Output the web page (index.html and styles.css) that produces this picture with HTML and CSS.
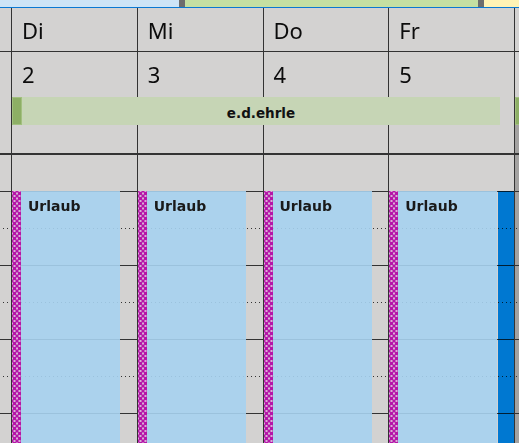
FILE: index.html
```html
<!DOCTYPE html>
<html lang="de">
<head>
<meta charset="utf-8">
<title>Kalender</title>
<link rel="stylesheet" href="styles.css">
</head>
<body>
<div class="top">
  <span class="seg blue"></span><span class="seg sep"></span><span class="seg green"></span><span class="seg sep"></span><span class="seg yellow"></span>
</div>
<div class="cal">
  <div class="col gutter">
    <div class="name"></div>
    <div class="num"></div>
    <div class="blank"></div>
    <div class="hour"></div><div class="hour"></div><div class="hour"></div><div class="hour"></div>
  </div>
  <div class="col day">
    <div class="name">Di</div>
    <div class="num">2</div>
    <div class="blank"></div>
    <div class="hour"></div><div class="hour"></div><div class="hour"></div><div class="hour"></div>
    <div class="event"><span class="hatch"></span><span class="title">Urlaub</span></div>
  </div>
  <div class="col day">
    <div class="name">Mi</div>
    <div class="num">3</div>
    <div class="blank"></div>
    <div class="hour"></div><div class="hour"></div><div class="hour"></div><div class="hour"></div>
    <div class="event"><span class="hatch"></span><span class="title">Urlaub</span></div>
  </div>
  <div class="col day">
    <div class="name">Do</div>
    <div class="num">4</div>
    <div class="blank"></div>
    <div class="hour"></div><div class="hour"></div><div class="hour"></div><div class="hour"></div>
    <div class="event"><span class="hatch"></span><span class="title">Urlaub</span></div>
  </div>
  <div class="col day">
    <div class="name">Fr</div>
    <div class="num">5</div>
    <div class="blank"></div>
    <div class="hour"></div><div class="hour"></div><div class="hour"></div><div class="hour"></div>
    <div class="event"><span class="hatch"></span><span class="title">Urlaub</span></div>
    <div class="event sel"></div>
  </div>
  <div class="col day rest">
    <div class="name"></div>
    <div class="num"></div>
    <div class="blank"></div>
    <div class="hour"></div><div class="hour"></div><div class="hour"></div><div class="hour"></div>
  </div>
  <div class="allday main"><span class="grip"></span><span class="label">e.d.ehrle</span></div>
  <div class="allday next"><span class="grip"></span></div>
</div>
</body>
</html>
```

FILE: styles.css
```css
* { box-sizing: border-box; }

body {
  margin: 0;
  width: 519px;
  height: 443px;
  overflow: hidden;
  background: #d3d2d1;
  font-family: "Noto Sans", "Open Sans", sans-serif;
  color: #111;
}

.top {
  display: flex;
  height: 8px;
  border-bottom: 1px solid #0a78d2;
}
.seg { height: 7px; }
.seg.blue { width: 179px; background: #cde4f6; }
.seg.sep { width: 6px; background: #6d6d6d; }
.seg.green { width: 293px; background: #c4dfa2; }
.seg.yellow { flex: 1; background: #fff3b5; }

.cal {
  position: relative;
  display: grid;
  grid-template-columns: 11px repeat(4, 125.75px) 1fr;
  height: 435px;
  overflow: hidden;
}

.col {
  position: relative;
  display: flex;
  flex-direction: column;
}
.day { border-left: 1px solid #333; }

.name,
.num {
  flex: none;
  padding: 7px 0 0 10px;
  font-size: 22px;
  line-height: normal;
  color: #0c0c0c;
}
.name {
  height: 44px;
  border-bottom: 1px solid #333;
}
.num {
  height: 103px;
  border-bottom: 2px solid #333;
}
.blank {
  flex: none;
  height: 37px;
  border-bottom: 1px solid #333;
}
.hour {
  flex: none;
  height: 74px;
  border-bottom: 1px solid #333;
  background: linear-gradient(to right, #333 1px, transparent 1px) 1px 36px / 4px 1px repeat-x;
}
.gutter .hour { background-position: 3px 36px; }

.rest .num { background: linear-gradient(#d3d2d1 73px, #a3a2a1 73px); }
.rest .blank, .rest .hour { background-color: #a3a2a1; }

.event {
  position: absolute;
  top: 183px;
  left: 0;
  width: 108px;
  bottom: 0;
  display: flex;
  background: rgba(166, 209, 239, 0.9);
}
.event.sel {
  left: 109px;
  right: 0;
  width: auto;
  background: #0092ff;
  mix-blend-mode: multiply;
}
.hatch {
  flex: none;
  width: 9px;
  background-color: #d7b0d5;
  background-image:
    radial-gradient(circle, #b514a8 1.4px, transparent 1.8px),
    radial-gradient(circle, #b514a8 1.4px, transparent 1.8px);
  background-size: 5px 5px;
  background-position: 0 0, 2.5px 2.5px;
}
.title {
  padding: 7px 0 0 7px;
  font-family: "DejaVu Sans", sans-serif;
  font-weight: bold;
  font-size: 14px;
  color: #1a1a1a;
}

.allday {
  position: absolute;
  top: 89px;
  height: 28px;
  display: flex;
  background: #c6d5b5;
}
.allday.main { left: 12px; width: 488px; }
.allday.next { left: 515px; width: 12px; }
.grip {
  flex: none;
  width: 10px;
  background: #8daf65;
  border: 1px solid #a2c07f;
}
.label {
  flex: 1;
  text-align: center;
  padding-top: 8px;
  line-height: 16px;
  font-family: "DejaVu Sans", sans-serif;
  font-weight: bold;
  font-size: 13.5px;
  color: #111;
}
```
